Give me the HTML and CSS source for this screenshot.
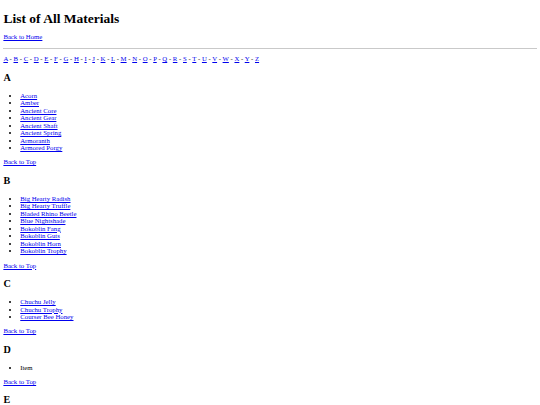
FILE: index.html
```html
<!DOCTYPE html>
<html lang="en">
<head>
<meta charset="utf-8">
<title>List of All Materials</title>
<link rel="stylesheet" href="styles.css">
</head>
<body>
<h1 id="top" class="page-title">List of All Materials</h1>
<p><a href="#">Back to Home</a></p>
<hr class="divider">
<p class="alphabet"><a href="#A">A</a> - <a href="#B">B</a> - <a href="#C">C</a> - <a href="#D">D</a> - <a href="#E">E</a> - <a href="#F">F</a> - <a href="#G">G</a> - <a href="#H">H</a> - <a href="#I">I</a> - <a href="#J">J</a> - <a href="#K">K</a> - <a href="#L">L</a> - <a href="#M">M</a> - <a href="#N">N</a> - <a href="#O">O</a> - <a href="#P">P</a> - <a href="#Q">Q</a> - <a href="#R">R</a> - <a href="#S">S</a> - <a href="#T">T</a> - <a href="#U">U</a> - <a href="#V">V</a> - <a href="#W">W</a> - <a href="#X">X</a> - <a href="#Y">Y</a> - <a href="#Z">Z</a></p>

<h2 id="A" class="letter">A</h2>
<ul class="items">
<li><a href="#">Acorn</a></li>
<li><a href="#">Amber</a></li>
<li><a href="#">Ancient Core</a></li>
<li><a href="#">Ancient Gear</a></li>
<li><a href="#">Ancient Shaft</a></li>
<li><a href="#">Ancient Spring</a></li>
<li><a href="#">Armoranth</a></li>
<li><a href="#">Armored Porgy</a></li>
</ul>
<p><a href="#top">Back to Top</a></p>

<h2 id="B" class="letter">B</h2>
<ul class="items">
<li><a href="#">Big Hearty Radish</a></li>
<li><a href="#">Big Hearty Truffle</a></li>
<li><a href="#">Bladed Rhino Beetle</a></li>
<li><a href="#">Blue Nightshade</a></li>
<li><a href="#">Bokoblin Fang</a></li>
<li><a href="#">Bokoblin Guts</a></li>
<li><a href="#">Bokoblin Horn</a></li>
<li><a href="#">Bokoblin Trophy</a></li>
</ul>
<p><a href="#top">Back to Top</a></p>

<h2 id="C" class="letter">C</h2>
<ul class="items">
<li><a href="#">Chuchu Jelly</a></li>
<li><a href="#">Chuchu Trophy</a></li>
<li><a href="#">Courser Bee Honey</a></li>
</ul>
<p><a href="#top">Back to Top</a></p>

<h2 id="D" class="letter">D</h2>
<ul class="items">
<li>Item</li>
</ul>
<p><a href="#top">Back to Top</a></p>

<h2 id="E" class="letter">E</h2>
</body>
</html>
```
FILE: styles.css
```css
body {
  margin: 3.375px;
  font-family: "Liberation Serif", "Times New Roman", serif;
  font-size: 6.75px;
  line-height: 1.11;
  color: #000;
  background: #fff;
}
a {
  color: #0000ee;
}
p {
  margin: 6.75px 0;
}
.page-title {
  font-size: 13.5px;
  margin: 7.5px 0;
  font-weight: bold;
}
.letter {
  font-size: 10.125px;
  margin: 8.9px 0;
  font-weight: bold;
}
.items {
  margin: 6.75px 0;
  padding-left: 16.875px;
}
.divider {
  border: 0;
  border-top: 1px solid #c9c9c9;
  height: 0;
  margin: 3.375px 0;
}
```
